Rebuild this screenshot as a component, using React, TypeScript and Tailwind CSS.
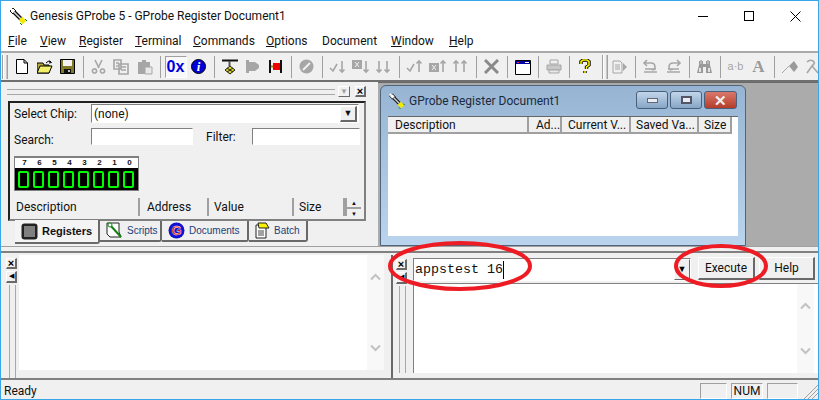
const sunken = 'border border-t-[#808080] border-l-[#808080] border-r-white border-b-white';
const raised = 'border border-t-white border-l-white border-r-[#696969] border-b-[#696969] bg-[#f0f0f0]';
const headerCell = 'flex items-center border-r-2 border-r-[#a0a0a0] bg-[#f0f0f0] h-full whitespace-nowrap';

const Wrench = ({ size = 18 }: { size?: number }) => (
  <svg width={size} height={size} viewBox="0 0 18 18">
    <path d="M1 4L4 7L7 4L4 1Z" fill="#fff" stroke="#111" />
    <path d="M1 1L6 6" stroke="#fff" strokeWidth="2" />
    <path d="M5 5L12 12" stroke="#111" strokeWidth="4" />
    <path d="M5 5L12 12" stroke="#d8d8d8" strokeWidth="1.500" />
    <path d="M11.500 11.500L15.500 15.500" stroke="#f2ea00" strokeWidth="5" />
    <path d="M11 16L13 18M16 12L18 14" stroke="#008000" strokeWidth="1" />
  </svg>
);

const Grey = ({ d }: { d: string }) => (
  <svg width="17" height="16" viewBox="0 0 17 16">
    <path d={d} fill="none" stroke="#a6a6a6" strokeWidth="1.6" />
  </svg>
);

const Tool = ({ children }: { children?: React.ReactNode }) => (
  <div className="w-[23px] h-full shrink-0 flex items-center justify-center">{children}</div>
);

const Sep = () => (
  <div className="w-2 h-full shrink-0 flex items-center">
    <div className="ml-1 w-px h-[22px] bg-[#a0a0a0]" />
  </div>
);

const BarGrip = () => (
  <div className="h-[24px] w-[6px] shrink-0 flex justify-between border-x border-x-[#a0a0a0]">
    <div className="w-px bg-white" />
    <div className="w-px bg-[#c8c8c8]" />
  </div>
);

const Toolbar = () => (
  <div className="h-[31px] shrink-0 flex items-center overflow-hidden border-t-2 border-t-[#a9a9a9] border-b-2 border-b-[#6f6f6f] bg-[#f0f0f0]">
    <div className="pl-[1px] pr-[2px]"><BarGrip /></div>
    <Tool>
      <svg width="12" height="15" viewBox="0 0 12 15"><path d="M.5.5H8L11.5 4V14.500H.5Z M8 .5V4H11.500" fill="#fff" stroke="#000" /></svg>
    </Tool>
    <Tool>
      <svg width="16" height="14" viewBox="0 0 16 14">
        <path d="M0 13V3H6L7 5H12V13Z" fill="#b8a73a" stroke="#000" />
        <path d="M0 13L3 6H15L12 13Z" fill="#f2ef6a" stroke="#000" />
        <path d="M9 3Q11 0 14 2M12.500 .5L14.500 2.500L12 3" fill="none" stroke="#000" />
      </svg>
    </Tool>
    <Tool>
      <svg width="15" height="15" viewBox="0 0 15 15">
        <path d="M.5.5H14.500V14.500H.5Z" fill="#807a28" stroke="#000" />
        <path d="M3 1H12V7H3Z" fill="#f2f2f2" />
        <path d="M4 10H11V14H4Z" fill="#111" />
        <path d="M8 11H10V13H8Z" fill="#c0c0c0" />
      </svg>
    </Tool>
    <Sep />
    <Tool><Grey d="M5 1L9 9M12 1L8 9M4 10A2 2 0 1 0 5 14 2 2 0 1 0 4 10M12 10A2 2 0 1 0 13 14 2 2 0 1 0 12 10" /></Tool>
    <Tool><Grey d="M1 1H8V10H1ZM6 5H15V15H6ZM8 8H13M8 11H13M3 4H6M3 7H5" /></Tool>
    <Tool>
      <svg width="16" height="16" viewBox="0 0 16 16"><path d="M1 3H5V1H9V3H13V15H1Z" fill="#a6a6a6" /><path d="M8 8H15V15H8Z" fill="#e8e8e8" stroke="#a6a6a6" /></svg>
    </Tool>
    <Sep />
    <Tool>
      <div className="w-[22px] h-[22px] bg-[#f8f8f8] border border-t-[#a0a0a0] border-l-[#a0a0a0] border-r-white border-b-white flex items-center justify-center">
        <span className="text-[#0000e0] text-[16px] font-bold font-['Liberation_Sans',sans-serif] leading-none">0x</span>
      </div>
    </Tool>
    <Tool>
      <div className="w-[15px] h-[15px] rounded-full bg-[#0000d8] border border-black flex items-center justify-center text-white text-[13px] italic font-bold font-['Liberation_Serif',serif] leading-none">i</div>
    </Tool>
    <Sep />
    <Tool>
      <svg width="16" height="16" viewBox="0 0 16 16">
        <path d="M0 1.500H16" stroke="#111" strokeWidth="2" />
        <path d="M7.500 2V7" stroke="#555" strokeWidth="2" />
        <path d="M8 7L13 11L8 15L3 11Z" fill="#d8d020" stroke="#222" />
        <path d="M5 9L11 13M11 9L5 13" stroke="#222" />
      </svg>
    </Tool>
    <Tool>
      <svg width="15" height="15" viewBox="0 0 15 15"><path d="M1 1H4V14H1Z" fill="#a6a6a6" /><path d="M4 3H10L14 6V9L10 12H4Z" fill="#a6a6a6" /></svg>
    </Tool>
    <Tool>
      <svg width="15" height="15" viewBox="0 0 15 15">
        <path d="M1 1H3V14H1ZM12 1H14V14H12Z" fill="#111" />
        <path d="M3 7.500H5M10 7.500H12" stroke="#c08000" strokeWidth="2" />
        <path d="M5 4H12V11H5Z" fill="#f00000" />
      </svg>
    </Tool>
    <Sep />
    <Tool>
      <svg width="15" height="15" viewBox="0 0 15 15"><circle cx="7.500" cy="7.500" r="7" fill="#a6a6a6" /><path d="M4 11L11 4" stroke="#f0f0f0" strokeWidth="2" /></svg>
    </Tool>
    <Sep />
    <Tool><Grey d="M1 9L4 12L8 5M13 2V13M10.500 10.500L13 13L15.500 10.500" /></Tool>
    <Tool>
      <svg width="17" height="15" viewBox="0 0 17 15"><path d="M0 1H10V10H0Z" fill="#a6a6a6" /><path d="M3 3L7 8M7 3L3 8" stroke="#f0f0f0" /><path d="M14 2V13M11.500 10.500L14 13L16.500 10.500" fill="none" stroke="#a6a6a6" strokeWidth="1.600" /></svg>
    </Tool>
    <Tool><Grey d="M4 2V13M1.500 10.500L4 13L6.500 10.500M12 2V13M9.500 10.500L12 13L14.500 10.500" /></Tool>
    <Sep />
    <Tool><Grey d="M1 9L4 12L8 5M13 13V2M10.500 4.500L13 2L15.500 4.500" /></Tool>
    <Tool>
      <svg width="17" height="15" viewBox="0 0 17 15"><path d="M0 4H10V13H0Z" fill="#a6a6a6" /><path d="M3 6L7 11M7 6L3 11" stroke="#f0f0f0" /><path d="M14 13V2M11.500 4.500L14 2L16.500 4.500" fill="none" stroke="#a6a6a6" strokeWidth="1.600" /></svg>
    </Tool>
    <Tool><Grey d="M4 13V2M1.500 4.500L4 2L6.500 4.500M12 13V2M9.500 4.500L12 2L14.500 4.500" /></Tool>
    <Sep />
    <Tool>
      <svg width="15" height="15" viewBox="0 0 15 15"><path d="M1 1L14 14M14 1L1 14" stroke="#8a8a8a" strokeWidth="3" /></svg>
    </Tool>
    <Sep />
    <Tool>
      <svg width="16" height="16" viewBox="0 0 16 16">
        <path d="M.5 1.500H15.500V15.500H.5Z" fill="#fff" stroke="#000" />
        <path d="M1 2H15V5H1Z" fill="#0000a0" />
        <path d="M2 3H4V4H2Z" fill="#ff2020" />
        <path d="M10 3H14V4H10Z" fill="#fff" />
      </svg>
    </Tool>
    <Sep />
    <Tool>
      <svg width="16" height="15" viewBox="0 0 16 15">
        <path d="M4 1H12V5H4Z" fill="none" stroke="#a6a6a6" />
        <path d="M1 6H15V11H1Z" fill="#c8c8c8" stroke="#a6a6a6" />
        <path d="M3 11H13V14H3Z" fill="#e8e8e8" stroke="#a6a6a6" />
      </svg>
    </Tool>
    <Sep />
    <Tool>
      <svg width="12" height="15" viewBox="0 0 12 15">
        <path d="M2 5V2.500L4 1H8L10 2.500V6L7.500 8V10M6 12V14" fill="none" stroke="#000" strokeWidth="3.400" />
        <path d="M2 5V2.500L4 1H8L10 2.500V6L7.500 8V10M6 12V14" fill="none" stroke="#f8f000" strokeWidth="1.600" />
      </svg>
    </Tool>
    <div className="w-[6px] shrink-0" />
    <BarGrip />
    <Tool>
      <svg width="16" height="14" viewBox="0 0 16 14"><path d="M1 1H8L10 3V13H1ZM3 5H8M3 7H8M3 9H8" fill="none" stroke="#a6a6a6" /><path d="M11 3L15 7L11 11Z" fill="#a6a6a6" /></svg>
    </Tool>
    <Sep />
    <Tool><Grey d="M2 13H15M3 10H14M5 1L2 4L5 7M2 4H9Q13 4 13 8T9 10" /></Tool>
    <Tool><Grey d="M2 13H15M3 10H14M12 1L15 4L12 7M15 4H8Q4 4 4 8T8 10" /></Tool>
    <Sep />
    <Tool>
      <svg width="17" height="15" viewBox="0 0 17 15">
        <path d="M3 2H7V5H10V2H14V6L16 14H10V8H7V14H1L3 6Z" fill="#9a9a9a" />
        <path d="M4 1H6V5H4ZM11 1H13V5H11Z" fill="#b8b8b8" />
        <path d="M3 9H5V13H3ZM12 9H14V13H12Z" fill="#e4e4e4" />
      </svg>
    </Tool>
    <Sep />
    <Tool><span className="text-[#a6a6a6] text-[11px] font-['Liberation_Sans',sans-serif] whitespace-nowrap">a·b</span></Tool>
    <Tool><span className="text-[#9a9a9a] text-[17px] font-bold font-['Liberation_Serif',serif] leading-none">A</span></Tool>
    <Sep />
    <Tool>
      <svg width="18" height="15" viewBox="0 0 18 15"><path d="M1 14L8 7" stroke="#a6a6a6" /><path d="M8 7L13 2L17 8L13 13Z" fill="#9a9a9a" /></svg>
    </Tool>
    <Tool><Grey d="M3 3Q6 0 9 2T8 7L14 14M8 7L3 14" /></Tool>
  </div>
);

const SmallX = ({ className = '' }: { className?: string }) => (
  <div className={`${raised} border-r-2 border-b-2 flex items-center justify-center text-black text-[11px] font-bold leading-none font-['Liberation_Sans',sans-serif] ${className}`}>×</div>
);

const DockHeader = () => (
  <div className="h-[19px] flex items-center pl-[6px] pr-[12px] gap-[3px]">
    <div className="flex-1 h-[6px] border-y border-y-[#a8a8a8]" />
    <div className={`${raised} w-[12px] h-[11px] flex items-center justify-center text-[#a0a0a0] text-[8px] leading-none`}>▼</div>
    <SmallX className="ml-[2px] w-[11px] h-[11px]" />
  </div>
);

const ChipPanel = () => (
  <div className="ml-[7px] w-[358px] h-[120px] border-t-2 border-l-2 border-t-[#222] border-l-[#222] border-r-2 border-b-2 border-r-[#808080] border-b-[#808080] px-[1px] flex flex-col text-[12px] text-[#111]">
    <div className="flex items-center h-[19px] mt-[1px]">
      <span className="w-[80px] pl-[3px]">Select Chip:</span>
      <div className={`${sunken} bg-white w-[268px] h-full flex items-center justify-between pl-[2px] pr-[1px]`}>
        <span>(none)</span>
        <div className={`${raised} border-r-2 border-b-2 w-[17px] h-[16px] flex items-center justify-center text-[9px] leading-none`}>▼</div>
      </div>
    </div>
    <div className="flex items-center h-[17px] mt-[5px]">
      <span className="w-[80px] pl-[3px] pt-[7px]">Search:</span>
      <div className={`${sunken} bg-white w-[102px] h-full`} />
      <span className="ml-[13px] w-[46px]">Filter:</span>
      <div className={`${sunken} bg-white w-[108px] h-full`} />
    </div>
    <div className="ml-[3px] mt-[11px] w-[125px] h-[35px] border border-[#808080] flex flex-col">
      <div className="h-[11px] bg-white flex pl-[2px] border-t border-t-[#808080]">
        {[7, 6, 5, 4, 3, 2, 1, 0].map((n) => (
          <span key={n} className="w-[15px] text-center text-[8px] font-bold leading-[10px] font-['Liberation_Sans',sans-serif]">{n}</span>
        ))}
      </div>
      <div className="flex-1 bg-black flex items-center pl-[3px] gap-[4px]">
        {[0, 1, 2, 3, 4, 5, 6, 7].map((n) => (
          <div key={n} className="w-[11px] h-[17px] border-2 border-[#00ff00] rounded-[2px]" />
        ))}
      </div>
    </div>
    <div className="mt-[7px] h-[18px] flex">
      <div className={`${headerCell} w-[129px] pl-[5px]`}>Description</div>
      <div className={`${headerCell} w-[69px] pl-[7px]`}>Address</div>
      <div className={`${headerCell} w-[85px] pl-[5px]`}>Value</div>
      <div className={`${headerCell} w-[51px] pl-[5px]`}>Size</div>
      <div className="w-[16px] h-full flex flex-col border-l-2 border-l-[#a0a0a0]">
        <div className="flex-1 border-b-2 border-b-[#a0a0a0] text-[6px] leading-[9px] text-center">▲</div>
        <div className="flex-1 text-[6px] leading-[9px] text-center">▼</div>
      </div>
    </div>
  </div>
);

const Tab = ({ label, icon, active = false, className = '' }: { label: string; icon: React.ReactNode; active?: boolean; className?: string }) => (
  <div className={`${className} ${active ? 'h-[24px] bg-[#f4f4f4] text-[#111] font-bold text-[11px] -mt-px' : 'h-[21px] text-[#20407a] text-[10px]'} flex items-center gap-[4px] pl-[6px] border-r-2 border-b-2 border-r-[#696969] border-b-[#696969] rounded-br-[3px] font-['Liberation_Sans',sans-serif]`}>
    {icon}
    <span>{label}</span>
  </div>
);

const Tabs = () => (
  <div className="flex ml-[14px] items-start">
    <Tab
      active
      label="Registers"
      className="w-[85px]"
      icon={
        <svg width="17" height="17" viewBox="0 0 17 17" className="shrink-0">
          <rect x="0.500" y="0.500" width="16" height="16" rx="3" fill="#222" />
          <rect x="3" y="3" width="11" height="11" fill="#808080" />
        </svg>
      }
    />
    <Tab
      label="Scripts"
      className="w-[62px]"
      icon={
        <svg width="17" height="17" viewBox="0 0 17 17" className="shrink-0">
          <path d="M1 1H13V10L15 15H4L1 12Z" fill="#fff" stroke="#222" />
          <path d="M4 3L15 15" stroke="#108010" strokeWidth="2" />
          <circle cx="4" cy="3" r="2" fill="#fff" stroke="#108010" />
        </svg>
      }
    />
    <Tab
      label="Documents"
      className="w-[87px]"
      icon={
        <svg width="17" height="17" viewBox="0 0 17 17" className="shrink-0">
          <circle cx="8.500" cy="8.500" r="8" fill="#1010d0" />
          <text x="8.500" y="13" textAnchor="middle" fontSize="13" fontWeight="bold" fill="#e01010" stroke="#fff" strokeWidth="0.400" fontFamily="Liberation Sans">G</text>
        </svg>
      }
    />
    <Tab
      label="Batch"
      className="w-[59px]"
      icon={
        <svg width="15" height="17" viewBox="0 0 15 17" className="shrink-0">
          <path d="M1 3H11V16H1Z" fill="#fff" stroke="#222" />
          <path d="M3 1H11L14 6H4Z" fill="#f8f000" stroke="#222" />
          <path d="M3 9H9M3 11H9M3 13H9" stroke="#444" />
        </svg>
      }
    />
  </div>
);

const AeroBtn = ({ children, className }: { children: React.ReactNode; className: string }) => (
  <div className={`h-[18px] rounded-[3px] border border-[#48607c] flex items-center justify-center ${className}`}>{children}</div>
);

const DocWindow = () => (
  <div className="w-[366px] h-[161px] rounded-t-[6px] border border-[#50657c] bg-gradient-to-b from-[#97b5d3] to-[#bad4ee] flex flex-col">
    <div className="h-[30px] flex items-center shrink-0 pl-[8px] pr-[8px]">
      <Wrench size={16} />
      <span className="ml-[4px] text-[12px] text-[#1c2a3c]">GProbe Register Document1</span>
      <div className="ml-auto flex gap-[2px] mt-[-2px]">
        <AeroBtn className="w-[32px] bg-gradient-to-b from-[#c3d6ea] to-[#86a6c6]"><div className="w-[11px] h-[5px] bg-[#e8eef4] border border-[#667]" /></AeroBtn>
        <AeroBtn className="w-[32px] bg-gradient-to-b from-[#c3d6ea] to-[#86a6c6]"><div className="w-[11px] h-[8px] border-2 border-[#556] bg-[#e8eef4]" /></AeroBtn>
        <AeroBtn className="w-[33px] bg-gradient-to-b from-[#d8786a] to-[#b53b28]"><span className="text-[#f0f0f0] text-[15px] font-bold leading-none font-['Liberation_Sans',sans-serif]">✕</span></AeroBtn>
      </div>
    </div>
    <div className="mx-[7px] mb-[9px] flex-1 bg-white border-t border-t-[#666] flex flex-col">
      <div className="h-[17px] flex text-[12px] text-[#111] shrink-0">
        <div className={`${headerCell} border-b-2 border-b-[#a0a0a0] w-[141px] pl-[7px]`}>Description</div>
        <div className={`${headerCell} border-b-2 border-b-[#a0a0a0] w-[33px] pl-[7px]`}>Ad...</div>
        <div className={`${headerCell} border-b-2 border-b-[#a0a0a0] w-[69px] pl-[6px]`}>Current V...</div>
        <div className={`${headerCell} border-b-2 border-b-[#a0a0a0] w-[68px] pl-[5px]`}>Saved Va...</div>
        <div className={`${headerCell} border-b-2 border-b-[#a0a0a0] w-[33px] pl-[5px]`}>Size</div>
      </div>
    </div>
  </div>
);

const Chevron = ({ up = false }: { up?: boolean }) => (
  <svg width="11" height="8" viewBox="0 0 11 8">
    <path d={up ? 'M1 6.500L5.500 2L10 6.500' : 'M1 1.500L5.500 6L10 1.500'} fill="none" stroke="#c2c2c2" strokeWidth="2" />
  </svg>
);

const VScroll = ({ className }: { className: string }) => (
  <div className={`w-[17px] bg-[#f8f8f8] flex flex-col justify-between items-center py-[18px] ${className}`}>
    <Chevron up />
    <Chevron />
  </div>
);

const PaneSide = ({ className = '' }: { className?: string }) => (
  <div className={`flex flex-col items-start ${className}`}>
    <SmallX className="w-[11px] h-[11px]" />
    <div className={`${raised} border-r-2 border-b-2 w-[11px] h-[12px] mt-[2px] flex items-center justify-center text-[7px] leading-none`}>◀</div>
    <div className="flex-1 w-[7px] mt-[2px] ml-[3px] border-x border-x-[#a8a8a8]" />
  </div>
);

const BottomLeft = () => (
  <div className="w-[392px] flex border-r-2 border-r-[#696969] shrink-0">
    <PaneSide className="w-[18px] pl-[5px] pt-[3px]" />
    <div className="flex-1 h-[115px] bg-white flex justify-end">
      <VScroll className="h-full" />
    </div>
    <div className="w-[7px] shrink-0" />
  </div>
);

const BottomRight = () => (
  <div className="flex-1 flex min-w-0">
    <PaneSide className="w-[17px] ml-[3px] pt-[4px] pb-[5px]" />
    <div className="flex-1 flex flex-col min-w-0">
      <div className="h-[28px] flex items-start pt-[2px] shrink-0">
        <div className={`${sunken} w-[278px] h-[23px] mt-[1px] bg-white flex items-center justify-between`}>
          <div className="flex items-center pl-[1px] h-full">
            <span className="font-['Liberation_Mono',monospace] text-[13.33px] text-[#111] whitespace-pre">appstest 16</span>
            <div className="w-px h-[18px] bg-black" />
          </div>
          <div className={`${raised} w-[16px] h-full flex items-center justify-center text-[9px] leading-none`}>▼</div>
        </div>
        <div className={`${raised} border-r-2 border-b-2 ml-[7px] w-[57px] h-[23px] flex items-center justify-center text-[12px] text-[#111]`}>Execute</div>
        <div className={`${raised} border-r-2 border-b-2 ml-[4px] w-[56px] h-[23px] flex items-center justify-center text-[12px] text-[#111]`}>Help</div>
      </div>
      <div className="h-[90px] bg-white border-t border-l border-t-[#808080] border-l-[#808080] flex justify-end pr-[4px]">
        <VScroll className="h-full" />
      </div>
    </div>
  </div>
);

const StatusBar = () => (
  <div className="h-[21px] shrink-0 border-t-2 border-t-[#808080] flex items-center text-[12px] text-[#111] pt-[3px]">
    <span className="pl-[3px]">Ready</span>
    <div className="ml-auto flex items-center gap-[4px] h-full">
      <div className="w-[27px] h-[16px] border border-t-[#a0a0a0] border-l-[#a0a0a0] border-r-white border-b-white" />
      <div className="w-[32px] h-[16px] border border-t-[#a0a0a0] border-l-[#a0a0a0] border-r-white border-b-white flex items-center justify-center">NUM</div>
      <div className="w-[31px] h-[16px] border border-t-[#a0a0a0] border-l-[#a0a0a0] border-r-white border-b-white" />
      <svg className="-ml-[4px]" width="20" height="16" viewBox="0 0 20 16"><path d="M6 16L20 2M10 16L20 6M14 16L20 10" stroke="#a0a0a0" /></svg>
    </div>
  </div>
);

export default function App() {
  return (
    <div className="relative w-[819px] h-[400px] overflow-hidden border border-[#3aa5e8] bg-[#f0f0f0] flex flex-col font-['Roboto','Open_Sans',sans-serif]">
      <div className="h-[30px] shrink-0 bg-white flex items-center pl-[8px]">
        <Wrench />
        <span className="ml-[3px] text-[12px] text-[#111]">Genesis GProbe 5 - GProbe Register Document1</span>
        <div className="ml-auto flex items-center h-full text-black">
          <div className="w-[46px] flex justify-center"><div className="w-[10px] h-px bg-black" /></div>
          <div className="w-[46px] flex justify-center"><div className="w-[10px] h-[10px] border border-black" /></div>
          <div className="w-[46px] flex justify-center">
            <svg width="11" height="11" viewBox="0 0 11 11"><path d="M.5.500L10.500 10.500M10.500.500L.5 10.500" stroke="#000" /></svg>
          </div>
        </div>
      </div>
      <div className="h-[20px] shrink-0 bg-white flex items-center text-[12px] text-[#111] pl-[7px]">
        <span className="w-[32px]"><u>F</u>ile</span>
        <span className="w-[39px]"><u>V</u>iew</span>
        <span className="w-[56px]"><u>R</u>egister</span>
        <span className="w-[58px]"><u>T</u>erminal</span>
        <span className="w-[73px]"><u>C</u>ommands</span>
        <span className="w-[56px]"><u>O</u>ptions</span>
        <span className="w-[69px]">Document</span>
        <span className="w-[58px]"><u>W</u>indow</span>
        <span><u>H</u>elp</span>
      </div>
      <Toolbar />
      <div className="h-[164px] shrink-0 flex">
        <div className="w-[377px] shrink-0 flex flex-col">
          <DockHeader />
          <ChipPanel />
          <Tabs />
        </div>
        <div className="flex-1 bg-[#ababab] pl-[2px] pt-[2px] border-t border-t-[#696969]">
          <DocWindow />
        </div>
      </div>
      <div className="h-[9px] shrink-0 border-t border-t-[#a0a0a0] relative">
        <div className="mt-[4px] h-[2px] bg-[#808080]" />
      </div>
      <div className="h-[123px] shrink-0 flex">
        <BottomLeft />
        <BottomRight />
      </div>
      <StatusBar />
      {/* hand drawn annotations on top of the screenshot */}
      <svg className="absolute left-[-1px] top-[-1px] pointer-events-none" width="819" height="400" viewBox="0 0 819 400">
        <ellipse cx="460" cy="266" rx="70" ry="23" fill="none" stroke="#ed1c24" strokeWidth="4" />
        <ellipse cx="721" cy="266" rx="45" ry="20" fill="none" stroke="#ed1c24" strokeWidth="4" />
      </svg>
    </div>
  );
}
